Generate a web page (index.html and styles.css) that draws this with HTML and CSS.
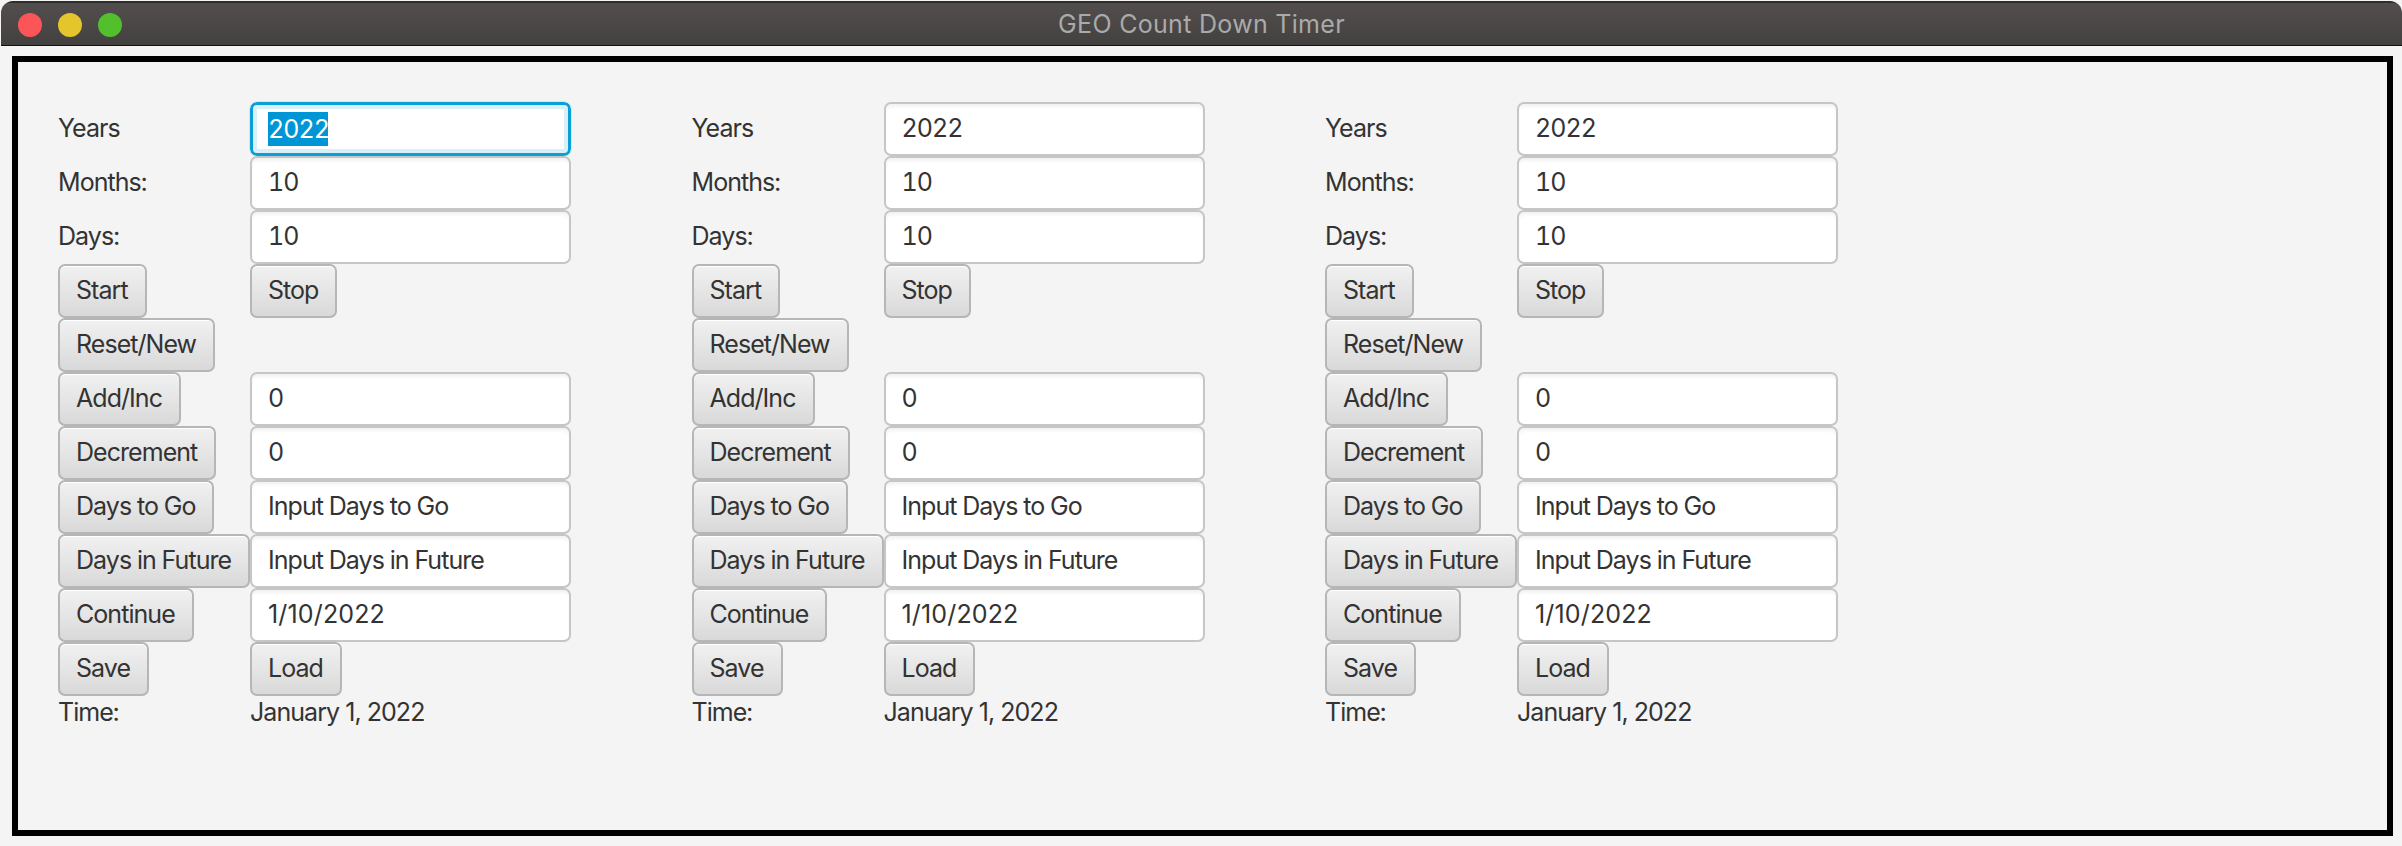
FILE: index.html
```html
<!DOCTYPE html>
<html lang="en">
<head>
<meta charset="utf-8">
<title>GEO Count Down Timer</title>
<link rel="stylesheet" href="styles.css">
</head>
<body>
<div class="window">
  <header class="titlebar">
    <div class="lights"><span class="light red"></span><span class="light yellow"></span><span class="light green"></span></div>
    <div class="title">GEO Count Down Timer</div>
  </header>
  <div class="body">
    <main class="panel">
      <section class="timer">
        <div class="label">Years</div><div class="field focused"><span class="selected">2022</span></div>
        <div class="label">Months:</div><div class="field">10</div>
        <div class="label">Days:</div><div class="field">10</div>
        <div class="btn">Start</div><div class="btn">Stop</div>
        <div class="btn wide">Reset/New</div>
        <div class="btn">Add/Inc</div><div class="field">0</div>
        <div class="btn">Decrement</div><div class="field">0</div>
        <div class="btn">Days to Go</div><div class="field">Input Days to Go</div>
        <div class="btn">Days in Future</div><div class="field">Input Days in Future</div>
        <div class="btn">Continue</div><div class="field date">1/10/2022</div>
        <div class="btn">Save</div><div class="btn">Load</div>
        <div class="text">Time:</div><div class="text long-date">January 1, 2022</div>
      </section>
      <section class="timer">
        <div class="label">Years</div><div class="field">2022</div>
        <div class="label">Months:</div><div class="field">10</div>
        <div class="label">Days:</div><div class="field">10</div>
        <div class="btn">Start</div><div class="btn">Stop</div>
        <div class="btn wide">Reset/New</div>
        <div class="btn">Add/Inc</div><div class="field">0</div>
        <div class="btn">Decrement</div><div class="field">0</div>
        <div class="btn">Days to Go</div><div class="field">Input Days to Go</div>
        <div class="btn">Days in Future</div><div class="field">Input Days in Future</div>
        <div class="btn">Continue</div><div class="field date">1/10/2022</div>
        <div class="btn">Save</div><div class="btn">Load</div>
        <div class="text">Time:</div><div class="text long-date">January 1, 2022</div>
      </section>
      <section class="timer">
        <div class="label">Years</div><div class="field">2022</div>
        <div class="label">Months:</div><div class="field">10</div>
        <div class="label">Days:</div><div class="field">10</div>
        <div class="btn">Start</div><div class="btn">Stop</div>
        <div class="btn wide">Reset/New</div>
        <div class="btn">Add/Inc</div><div class="field">0</div>
        <div class="btn">Decrement</div><div class="field">0</div>
        <div class="btn">Days to Go</div><div class="field">Input Days to Go</div>
        <div class="btn">Days in Future</div><div class="field">Input Days in Future</div>
        <div class="btn">Continue</div><div class="field date">1/10/2022</div>
        <div class="btn">Save</div><div class="btn">Load</div>
        <div class="text">Time:</div><div class="text long-date">January 1, 2022</div>
      </section>
    </main>
  </div>
</div>
</body>
</html>
```
FILE: styles.css
```css
* { box-sizing: border-box; }
html, body { margin: 0; height: 100%; background: #f4f4f4; }
body { overflow: hidden; font-family: Inter, "Liberation Sans", sans-serif; color: #333; }
.window {
  height: 845px;
  margin: 1px 0 0 1px;
  display: flex;
  flex-direction: column;
  border-radius: 12px;
  background: #f4f4f4;
  overflow: hidden;
}
.titlebar {
  position: relative;
  flex: 0 0 45px;
  display: flex;
  align-items: center;
  justify-content: center;
  background: linear-gradient(#524e4d, #434140);
  border-top: 2px solid #2e2d2c;
  border-bottom: 1px solid #111;
}
.lights {
  position: absolute;
  left: 17px;
  top: 10px;
  display: flex;
  gap: 16px;
}
.light { width: 24px; height: 24px; border-radius: 50%; }
.red { background: #fb5558; }
.yellow { background: #e4c52c; }
.green { background: #52bf2d; }
.title { font-size: 25px; color: #aaa; letter-spacing: 0.3px; }
.body { flex: 1; padding: 10px 9px 10px 11px; display: flex; }
.panel {
  flex: 1;
  border: 6px solid #000;
  padding: 40px;
  display: flex;
  gap: 120.5px;
  align-items: flex-start;
  background: #f4f4f4;
}
.timer {
  display: grid;
  grid-template-columns: 192px 321px;
  grid-auto-rows: 54px;
  font-size: 25px;
  letter-spacing: -0.95px;
  font-feature-settings: "tnum";
}
.label, .text { display: flex; align-items: center; padding-bottom: 2px; }
.text { height: 33px; }
.field {
  display: flex;
  align-items: center;
  padding: 0 0 2px 16px;
  background: #fff;
  border: 2px solid #c6c6c6;
  border-radius: 7px;
  box-shadow: inset 0 4px 4px -2px #efefef;
}
.date { font-feature-settings: normal; letter-spacing: 0.15px; }
.long-date { font-feature-settings: normal; }
.focused {
  border: 3px solid #0a9fd6;
  outline: 1px solid #c8edf6;
  box-shadow: inset 0 0 0 4px #d8f1f8;
  padding: 0 0 0 15px;
}
.selected {
  background: #0096d6;
  color: #fff;
  line-height: 34px;
  width: 60px;
}
.btn {
  justify-self: start;
  display: flex;
  align-items: center;
  padding: 0 17px 2px 16px;
  white-space: nowrap;
  background: linear-gradient(#f1f1f1, #d9d9d9);
  border: 2px solid #b6b6b6;
  border-radius: 7px;
  box-shadow: inset 0 1px 0 #fff;
}
.wide { grid-column: 1 / -1; }
```
